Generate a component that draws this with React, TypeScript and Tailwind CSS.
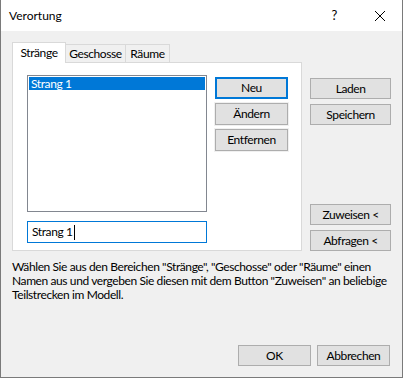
import React from 'react';

const font = { fontFamily: 'Lato, "Liberation Sans", Arial, sans-serif' };

type BtnProps = { label: string; focused?: boolean; ring?: boolean; className?: string };

function WinButton({ label, focused, ring, className }: BtnProps) {
  return (
    <div
      className={`flex items-center justify-center bg-[#e1e1e1] text-[12px] text-black ${
        focused ? 'border-2 border-[#0078d7]' : 'border border-[#adadad]'
      } ${ring ? 'shadow-[0_0_0_1px_#f0f0f0]' : ''} ${className ?? ''}`}
    >
      {label}
    </div>
  );
}

export default function App() {
  return (
    <div
      style={font}
      className="w-[403px] h-[378px] flex flex-col border-x border-b border-[#7a7a7a] bg-[#f0f0f0] text-black tracking-[-0.4px] select-none"
    >
      {/* title bar */}
      <div className="h-[31px] shrink-0 bg-white flex items-center pl-[8px] pr-[16px]">
        <span className="text-[12px] leading-none tracking-normal">Verortung</span>
        <div className="ml-auto flex items-center">
          <span className="text-[13px] leading-none mr-[37px]">?</span>
          <svg width="12" height="12" viewBox="0 0 12 12" className="mt-[1px]">
            <path d="M1 1 L11 11 M11 1 L1 11" stroke="#000" strokeWidth="1" fill="none" />
          </svg>
        </div>
      </div>

      {/* body */}
      <div className="flex-1 flex flex-col pt-[11px] pl-[11px] pr-[11px] pb-[11px]">
        <div className="flex">
          {/* tab control */}
          <div className="flex flex-col w-[291px]">
            <div className="flex items-end h-[20px] text-[12px]">
              <div className="relative z-10 h-[21px] -mb-[1px] w-[54px] bg-white border-t border-x border-[#d9d9d9] flex items-center justify-center pb-[1px]">
                Stränge
              </div>
              <div className="h-[18px] w-[60px] border-t border-r border-[#d9d9d9] flex items-center justify-center">
                Geschosse
              </div>
              <div className="h-[18px] w-[44px] border-t border-r border-[#d9d9d9] flex items-center justify-center">
                Räume
              </div>
            </div>
            <div className="h-[189px] bg-white border border-[#d9d9d9] pl-[14px] pt-[12px] flex">
              <div className="flex flex-col">
                <div className="w-[180px] h-[137px] border border-[#828790] bg-white p-[1px]">
                  <div className="h-[13px] bg-[#0078d7] text-white text-[12px] leading-[13px] pl-[2px]">Strang 1</div>
                </div>
                <div className="mt-[9px] w-[180px] h-[22px] border border-[#0078d7] bg-white flex items-center pl-[4px] text-[12px]">
                  Strang 1
                  <span className="inline-block h-[15px] border-l border-black ml-[1px]" />
                </div>
              </div>
              <div className="ml-[8px] pt-[2px] flex flex-col gap-[4px]">
                <WinButton label="Neu" focused className="w-[73px] h-[22px]" />
                <WinButton label="Ändern" ring className="w-[73px] h-[22px]" />
                <WinButton label="Entfernen" ring className="w-[73px] h-[22px]" />
              </div>
            </div>
          </div>

          {/* right column */}
          <div className="ml-[8px] w-[81px] flex flex-col justify-between pt-[36px]">
            <div className="flex flex-col gap-[5px]">
              <WinButton label="Laden" className="h-[21px]" />
              <WinButton label="Speichern" className="h-[21px]" />
            </div>
            <div className="flex flex-col gap-[5px]">
              <WinButton label="Zuweisen <" className="h-[21px]" />
              <WinButton label="Abfragen <" className="h-[21px]" />
            </div>
          </div>
        </div>

        <p className="mt-[9px] text-[12px] leading-[14px] whitespace-nowrap">
          Wählen Sie aus den Bereichen "Stränge", "Geschosse" oder "Räume" einen
          <br />
          Namen aus und vergeben Sie diesen mit dem Button "Zuweisen" an beliebige
          <br />
          Teilstrecken im Modell.
        </p>

        <div className="mt-auto flex justify-end gap-[6px] mr-[1px]">
          <WinButton label="OK" className="w-[73px] h-[21px]" />
          <WinButton label="Abbrechen" className="w-[73px] h-[21px]" />
        </div>
      </div>
    </div>
  );
}
